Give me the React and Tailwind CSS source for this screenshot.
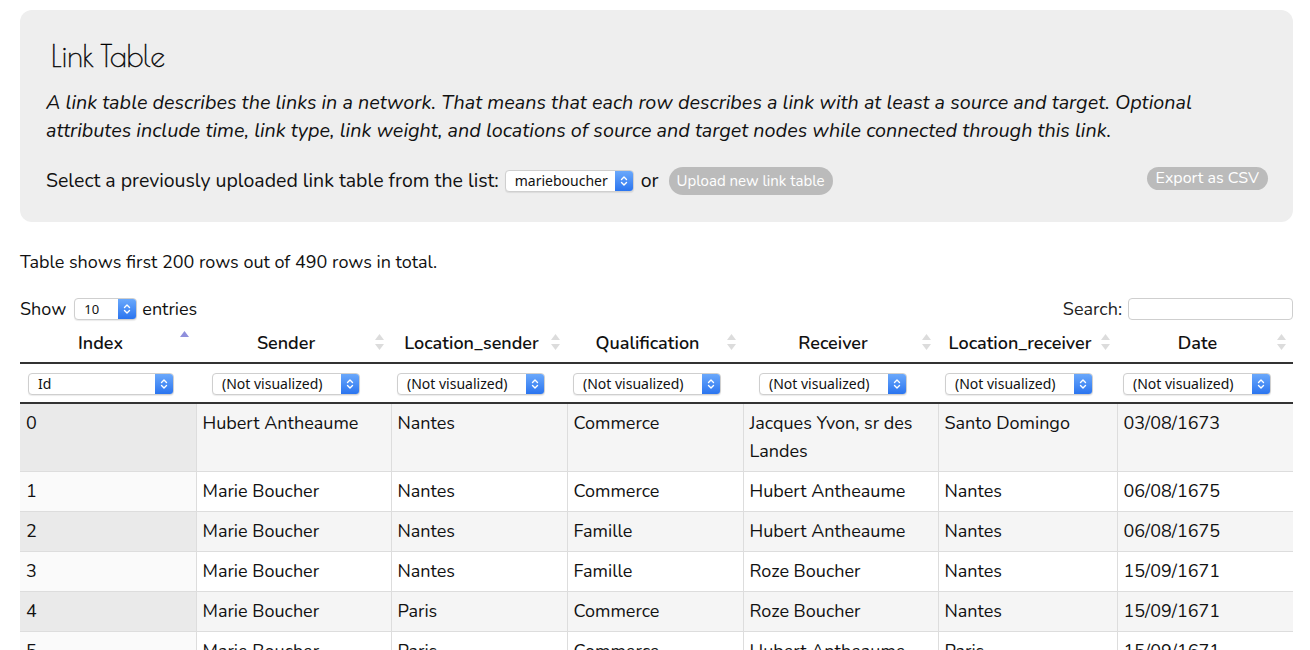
import React from "react";

const cols = [
  { name: "Index", w: 176, sel: "Id", ml: "ml-[8px]", sw: "w-[146px]" },
  { name: "Sender", w: 195, sel: "(Not visualized)", ml: "ml-[16px]", sw: "w-[148px]" },
  { name: "Location_sender", w: 176, sel: "(Not visualized)", ml: "ml-[6px]", sw: "w-[148px]" },
  { name: "Qualification", w: 176, sel: "(Not visualized)", ml: "ml-[6px]", sw: "w-[148px]" },
  { name: "Receiver", w: 195, sel: "(Not visualized)", ml: "ml-[16px]", sw: "w-[148px]" },
  { name: "Location_receiver", w: 179, sel: "(Not visualized)", ml: "ml-[7px]", sw: "w-[148px]" },
  { name: "Date", w: 176, sel: "(Not visualized)", ml: "ml-[6px]", sw: "w-[148px]" },
];

const rows = [
  ["0", "Hubert Antheaume", "Nantes", "Commerce", "Jacques Yvon, sr des Landes", "Santo Domingo", "03/08/1673"],
  ["1", "Marie Boucher", "Nantes", "Commerce", "Hubert Antheaume", "Nantes", "06/08/1675"],
  ["2", "Marie Boucher", "Nantes", "Famille", "Hubert Antheaume", "Nantes", "06/08/1675"],
  ["3", "Marie Boucher", "Nantes", "Famille", "Roze Boucher", "Nantes", "15/09/1671"],
  ["4", "Marie Boucher", "Paris", "Commerce", "Roze Boucher", "Nantes", "15/09/1671"],
  ["5", "Marie Boucher", "Paris", "Commerce", "Hubert Antheaume", "Paris", "15/09/1671"],
];

function Chevron() {
  return (
    <svg width="8" height="12" viewBox="0 0 8 12" fill="none" stroke="white" strokeWidth="1.4" strokeLinecap="round" strokeLinejoin="round">
      <path d="M1.5 4.5 L4 2 L6.5 4.5" />
      <path d="M1.5 7.5 L4 10 L6.5 7.5" />
    </svg>
  );
}

function MacSelect({ value, className = "", text = "text-[14px]" }) {
  return (
    <div className={`flex items-stretch bg-white border border-[#cfcfcf] rounded-[4px] shadow-[0_1px_1px_rgba(0,0,0,0.08)] overflow-hidden ${className}`}>
      <div className={`flex-1 flex items-center pl-[9px] ${text} text-[#111] leading-none whitespace-nowrap`} style={{ fontFamily: "'Noto Sans', 'Open Sans', sans-serif" }}>{value}</div>
      <div className="w-[18px] bg-gradient-to-b from-[#6aa8fb] to-[#2a74ef] flex items-center justify-center">
        <Chevron />
      </div>
    </div>
  );
}

function SortIcon({ active }) {
  if (active) {
    return (
      <svg width="11" height="18" viewBox="0 0 11 18">
        <path d="M5.5 1 L10 7 L1 7 Z" fill="#8f8fdc" />
      </svg>
    );
  }
  return (
    <svg width="11" height="18" viewBox="0 0 11 18">
      <path d="M5.5 1 L10 7 L1 7 Z" fill="#dcdcdc" />
      <path d="M5.5 17 L10 11 L1 11 Z" fill="#dcdcdc" />
    </svg>
  );
}

export default function App() {
  return (
    <div className="bg-white min-h-[650px] text-[#111] overflow-hidden" style={{ fontFamily: "Nunito, Lato, sans-serif" }}>
      <div className="pl-[20px] pr-[17px] pt-[10px]">
        <div className="bg-[#eeeeee] rounded-[12px] px-[26px] pt-[28px] pb-[26px]">
          <h1 className="text-[29px] leading-[36px] pl-[5px] text-black [-webkit-text-stroke:0.35px_black]" style={{ fontFamily: "'Poiret One', Lato, sans-serif" }}>Link Table</h1>
          <p className="italic text-[19.8px] leading-[28px] mt-[15px]">
            A link table describes the links in a network. That means that each row describes a link with at least a source and target. Optional attributes include time, link type, link weight, and locations of source and target nodes while connected through this link.
          </p>
          <div className="flex items-center mt-[21px] h-[30px]">
            <span className="text-[19.5px]">Select a previously uploaded link table from the list:</span>
            <MacSelect value="marieboucher" className="ml-[6px] w-[129px] h-[22px]" />
            <span className="text-[19.5px] ml-[7px]">or</span>
            <button className="ml-[10px] h-[28px] px-[8px] rounded-full bg-[#bbbbbb] text-white text-[15px]">Upload new link table</button>
            <div className="flex-1" />
            <button className="h-[23px] px-[9px] rounded-full bg-[#bbbbbb] text-white text-[16px] leading-none -mt-[6px] mr-[-1px]">Export as CSV</button>
          </div>
        </div>

        <div className="text-[18px] mt-[28px] leading-[24px]">Table shows first 200 rows out of 490 rows in total.</div>

        <div className="flex items-center justify-between mt-[23px] h-[24px]">
          <div className="flex items-center text-[18px]">
            <span>Show</span>
            <MacSelect value="10" className="ml-[8px] w-[63px] h-[22px]" text="text-[13px]" />
            <span className="ml-[5px]">entries</span>
          </div>
          <div className="flex items-center text-[18px] text-[#222]">
            <span>Search:</span>
            <div className="ml-[6px] w-[165px] h-[22px] border border-[#cfcfcf] rounded-[4px] bg-white" />
          </div>
        </div>

        <table className="mt-[6px] border-collapse table-fixed w-[1273px]">
          <colgroup>
            {cols.map((c) => (
              <col key={c.name} style={{ width: c.w }} />
            ))}
          </colgroup>
          <thead>
            <tr className="border-b-[2px] border-[#333]">
              {cols.map((c, i) => (
                <th key={c.name} className="relative h-[36px] pb-[3px] pl-[4px] pr-[19px] text-[18px] font-semibold text-center whitespace-nowrap">
                  <span>{c.name}</span>
                  <span className={`absolute ${i === 0 ? "right-[6px] top-[3px]" : "right-[6px] top-[6px]"}`}>
                    <SortIcon active={i === 0} />
                  </span>
                </th>
              ))}
            </tr>
            <tr className="border-b-[2px] border-[#333]">
              {cols.map((c) => (
                <th key={c.name} className="h-[40px] p-0 pt-[1px] font-normal text-left align-middle">
                  <MacSelect value={c.sel} className={`h-[22px] ${c.ml} ${c.sw}`} />
                </th>
              ))}
            </tr>
          </thead>
          <tbody>
            {rows.map((r, ri) => (
              <tr key={ri} className={`${ri % 2 === 0 ? "bg-[#f5f5f5]" : "bg-white"} border-b border-[#dddddd]`}>
                {r.map((cell, ci) => (
                  <td
                    key={ci}
                    className={`align-top px-[6px] pt-[5px] pb-[6px] text-[18px] leading-[28px] ${ci > 0 ? "border-l border-[#dddddd]" : ""} ${ci === 0 ? (ri % 2 === 0 ? "bg-[#eaeaea]" : "bg-[#fafafa]") : ""}`}
                  >
                    {cell}
                  </td>
                ))}
              </tr>
            ))}
          </tbody>
        </table>
      </div>
    </div>
  );
}
